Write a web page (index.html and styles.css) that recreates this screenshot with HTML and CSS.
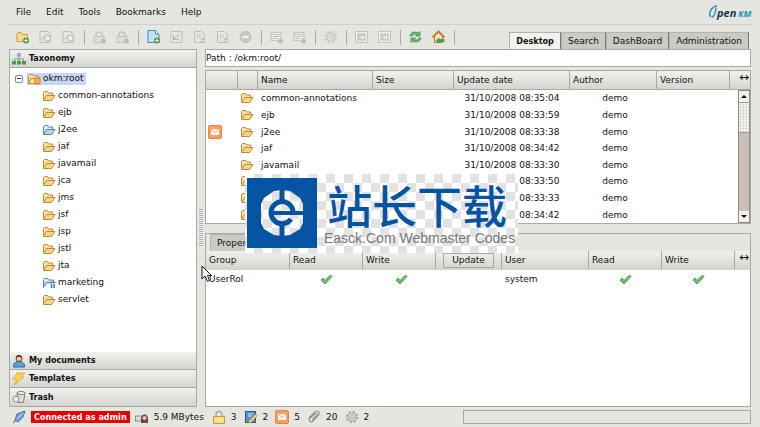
FILE: index.html
```html
<!DOCTYPE html>
<html lang="en">
<head>
    <meta charset="UTF-8">
    <meta name="viewport" content="width=device-width, initial-scale=1.0">
    <title>OpenKM</title>
    <link rel="stylesheet" href="styles.css">
</head>
<body>
    <!-- Shared icons -->
    <svg class="sprite" aria-hidden="true">
        <symbol id="folder" viewBox="0 0 14 12">
            <path d="M1.5 9.5V2.5L2.5 1.5H5.5L6.5 3H10.5V5" fill="#fbe3a4" stroke="#b98a3c"/>
            <path d="M1.5 10.5L4.5 5.5H13L9.5 10.5Z" fill="#fbd67c" stroke="#b98a3c" stroke-linejoin="round"/>
        </symbol>
        <symbol id="folder-blue" viewBox="0 0 14 12">
            <path d="M1.5 9.5V2.5L2.5 1.5H5.5L6.5 3H10.5V5" fill="#d8ebf6" stroke="#5582a0"/>
            <path d="M1.5 10.5L4.5 5.5H13L9.5 10.5Z" fill="#b4d7ec" stroke="#5582a0" stroke-linejoin="round"/>
        </symbol>
        <symbol id="folder-shared" viewBox="0 0 14 12">
            <path d="M1.5 10.5V2.5L2.5 1.5H5.5L6.5 3H11.5V5M1.5 10.5L4 5.5H10" fill="#d8ebf6" stroke="#5582a0"/>
            <path d="M8 5.5H13.5M9.5 7V11M12 7V11" stroke="#427ba4" stroke-width="1.5"/>
        </symbol>
        <symbol id="folder-root" viewBox="0 0 14 12">
            <path d="M1.5 10.5V2.5L2.5 1.5H5.5L6.5 3H11.5V10.5Z" fill="#fbe3a4" stroke="#c98d36"/>
            <path d="M1.5 10.5L4 5.5H9" fill="none" stroke="#c98d36"/>
            <rect x="8" y="5" width="5" height="6" fill="#f6b24d" stroke="#df7932"/>
        </symbol>
        <symbol id="mail" viewBox="0 0 14 14">
            <rect x=".5" y=".5" width="13" height="13" rx="1.5" fill="#f9a05c" stroke="#ee7f45"/>
            <rect x="3" y="4" width="8" height="6" fill="#fff"/>
            <path d="M3 4L7 7.5L11 4" fill="none" stroke="#f5a468"/>
        </symbol>
        <symbol id="check" viewBox="0 0 13 11">
            <path d="M1 6L3 4L5 6.5L10.5 1L12 2.5L5 10Z" fill="#6cc46a" stroke="#3b8a43" stroke-width=".8"/>
        </symbol>
        <symbol id="plus" viewBox="0 0 14 14">
            <circle cx="10.5" cy="10.5" r="3" fill="#4c9d42"/>
            <path d="M8.8 10.5H12.2M10.5 8.8V12.2" stroke="#fff"/>
        </symbol>
        <symbol id="doc" viewBox="0 0 14 14">
            <path d="M2 1.5H9L12 4.5V12.5H2Z" fill="#e6e6e3" stroke="#bdbdba"/>
            <path d="M4 5.5H9M4 7.5H8" stroke="#c6c6c3"/>
            <circle cx="10.5" cy="10.5" r="2.5" fill="#c2c2bf"/>
            <path d="M9 10.5H12" stroke="#eee"/>
        </symbol>
        <symbol id="doc-find" viewBox="0 0 14 14">
            <path d="M1.5 1.5H9L12 4.5V12.5H1.5Z" fill="#e6e6e3" stroke="#bdbdba"/>
            <path d="M3 10L7 5V10" fill="none" stroke="#c0c0bd"/>
            <circle cx="9" cy="8" r="3" fill="#efefec" stroke="#b4b4b1"/>
        </symbol>
        <symbol id="edit" viewBox="0 0 14 14">
            <rect x="1.5" y="1.5" width="11" height="11" fill="#e6e6e3" stroke="#bdbdba"/>
            <path d="M4 9.5L10 4M4 5V9.5H9" fill="none" stroke="#b0b0ad"/>
        </symbol>
        <symbol id="lock" viewBox="0 0 14 14">
            <path d="M3.5 7V5A3 3 0 0 1 9.5 5V7" fill="none" stroke="#c2c2bf" stroke-width="1.5"/>
            <rect x="1.5" y="6.5" width="10" height="6" fill="#dededb" stroke="#c2c2bf"/>
            <circle cx="11" cy="11" r="2.5" fill="#bdbdba"/>
        </symbol>
        <symbol id="list" viewBox="0 0 14 14">
            <rect x="1.5" y="2.5" width="10" height="8" fill="#eeeeeb" stroke="#c2c2bf"/>
            <path d="M1.5 4.5H11.5M3 6.5H10M3 8.5H8" stroke="#c2c2bf"/>
            <circle cx="11" cy="11" r="2.5" fill="#bdbdba"/>
        </symbol>
        <symbol id="gear" viewBox="0 0 14 14">
            <circle cx="7" cy="7" r="5.3" fill="none" stroke="#a9a9a6" stroke-width="2" stroke-dasharray="2.1 2.06"/>
            <circle cx="7" cy="7" r="4" fill="#dededb" stroke="#a4a4a1"/>
            <circle cx="7" cy="7" r="1.5" fill="#f5f5f3" stroke="#a4a4a1"/>
        </symbol>
        <symbol id="image" viewBox="0 0 14 14">
            <rect x="1" y="1.5" width="12" height="11" fill="#ededea" stroke="#c2c2bf"/>
            <rect x="3.5" y="4" width="7" height="6" fill="#d2d2cf" stroke="#bdbdba"/>
            <path d="M6 7L8 9L10 6" fill="none" stroke="#fff"/>
        </symbol>
    </svg>

    <header class="top">
        <nav class="menu">
            <a href="#">File</a>
            <a href="#">Edit</a>
            <a href="#">Tools</a>
            <a href="#">Bookmarks</a>
            <a href="#">Help</a>
        </nav>
        <svg class="logo" viewBox="0 0 44 16" role="img" aria-label="OpenKM">
            <path d="M3 13C0 11 3 4 6 3M4 13.5C7 12 8 6 8 3.5M6 2.5L9 2" fill="none" stroke="#2b8fc4" stroke-width="1.4"/>
            <text x="9" y="13" class="logo-open">pen</text>
            <text x="30" y="13" class="logo-km">KM</text>
        </svg>
    </header>

    <div class="bar">
        <div class="toolbar">
            <button aria-label="New folder"><svg viewBox="0 0 14 14"><path d="M1.5 11.5V3.5L2.5 2.5H5.5L7 4.5H12V11.5Z" fill="#fbdc8a" stroke="#c89b45"/><use href="#plus"/></svg></button>
            <button aria-label="Find document" disabled><svg><use href="#doc-find"/></svg></button>
            <button aria-label="Find folder" disabled><svg><use href="#doc-find"/></svg></button>
            <i class="sep"></i>
            <button aria-label="Lock" disabled><svg><use href="#lock"/></svg></button>
            <button aria-label="Unlock" disabled><svg><use href="#lock"/></svg></button>
            <i class="sep"></i>
            <button aria-label="Add document"><svg viewBox="0 0 14 14"><path d="M1.5 .5H9L12.5 4V12.5H1.5Z" fill="#c5e0f5" stroke="#4488b8"/><path d="M9 .5V4H12.5" fill="#fff" stroke="#4488b8"/><use href="#plus"/></svg></button>
            <button aria-label="Edit" disabled><svg><use href="#edit"/></svg></button>
            <button aria-label="Check in" disabled><svg><use href="#doc"/></svg></button>
            <button aria-label="Cancel check out" disabled><svg><use href="#doc"/></svg></button>
            <button aria-label="Delete" disabled><svg viewBox="0 0 14 14"><circle cx="7" cy="7" r="5.5" fill="#c9c9c6" stroke="#bdbdba"/><path d="M4 7H10" stroke="#f2f2f0" stroke-width="2"/></svg></button>
            <i class="sep"></i>
            <button aria-label="Add property group" disabled><svg><use href="#list"/></svg></button>
            <button aria-label="Remove property group" disabled><svg><use href="#list"/></svg></button>
            <i class="sep"></i>
            <button aria-label="Workflow" disabled><svg class="faded"><use href="#gear"/></svg></button>
            <i class="sep"></i>
            <button aria-label="Scanner" disabled><svg><use href="#image"/></svg></button>
            <button aria-label="Uploader" disabled><svg><use href="#image"/></svg></button>
            <i class="sep"></i>
            <button aria-label="Refresh"><svg viewBox="0 0 14 14"><path d="M1.5 6C2 2 7 1 10 3L11.5 1.5V6H7L8.5 4.5C6.5 3.5 4 4 3.5 6Z" fill="#67b866" stroke="#3b8747" stroke-width=".7"/><path d="M12.5 8C12 12 7 13 4 11L2.5 12.5V8H7L5.5 9.5C7.5 10.5 10 10 10.5 8Z" fill="#67b866" stroke="#3b8747" stroke-width=".7"/></svg></button>
            <button aria-label="Home"><svg viewBox="0 0 14 14"><path d="M3 6.5V12.5H11V6.5" fill="#f8e4ba" stroke="#b07a3e"/><path d="M1 7.5L7 1.5L13 7.5" fill="none" stroke="#cf7a30" stroke-width="2"/><path d="M4 10.5L8 7.5V9H13V12H8V13.5Z" fill="#4fa04a"/></svg></button>
            <i class="sep"></i>
        </div>
        <div class="tabs">
            <button class="tab active">Desktop</button>
            <button class="tab">Search</button>
            <button class="tab">DashBoard</button>
            <button class="tab">Administration</button>
        </div>
    </div>

    <main class="main">
        <aside class="stack">
            <button class="stack-head">
                <svg viewBox="0 0 14 14"><path d="M7 4V7M2.5 9V7H11.5V9M7 7V9" fill="none" stroke="#8a9a8a"/><rect x="5" y="1" width="4" height="3.5" fill="#8fb0d6"/><rect x="0" y="9" width="4" height="3.5" fill="#4a9a4a"/><rect x="5" y="9" width="4" height="3.5" fill="#4a9a4a"/><rect x="10" y="9" width="4" height="3.5" fill="#4a9a4a"/></svg>
                Taxonomy
            </button>
            <div class="tree">
                <div class="root">
                    <button class="toggle" aria-label="Collapse"></button>
                    <a href="#" class="selected"><svg><use href="#folder-root"/></svg>okm:root</a>
                </div>
                <ul>
                    <li><a href="#"><svg><use href="#folder"/></svg>common-annotations</a></li>
                    <li><a href="#"><svg><use href="#folder"/></svg>ejb</a></li>
                    <li><a href="#"><svg><use href="#folder-blue"/></svg>j2ee</a></li>
                    <li><a href="#"><svg><use href="#folder"/></svg>jaf</a></li>
                    <li><a href="#"><svg><use href="#folder"/></svg>javamail</a></li>
                    <li><a href="#"><svg><use href="#folder"/></svg>jca</a></li>
                    <li><a href="#"><svg><use href="#folder"/></svg>jms</a></li>
                    <li><a href="#"><svg><use href="#folder"/></svg>jsf</a></li>
                    <li><a href="#"><svg><use href="#folder"/></svg>jsp</a></li>
                    <li><a href="#"><svg><use href="#folder"/></svg>jstl</a></li>
                    <li><a href="#"><svg><use href="#folder"/></svg>jta</a></li>
                    <li><a href="#"><svg><use href="#folder-shared"/></svg>marketing</a></li>
                    <li><a href="#"><svg><use href="#folder"/></svg>servlet</a></li>
                </ul>
            </div>
            <button class="stack-head">
                <svg viewBox="0 0 14 14"><path d="M1.5 13C1 9 4 7.5 7 7.5S13 9 12.5 13Z" fill="#5b9be0" stroke="#31659f"/><circle cx="7" cy="4.5" r="3" fill="#f0c49b" stroke="#6b3b1d"/><path d="M4 4C4 0 10 0 10 4L7 2.5Z" fill="#5c2d14"/></svg>
                My documents
            </button>
            <button class="stack-head">
                <svg viewBox="0 0 14 14"><path d="M5 1H13L9 5H12L2 13L5 7.5H1Z" fill="#fbd34a" stroke="#dba83a" stroke-width=".8"/></svg>
                Templates
            </button>
            <button class="stack-head">
                <svg viewBox="0 0 14 14"><path d="M5 3L6 12.5H11.5L13 3Z" fill="#dcdcda" stroke="#80807e"/><ellipse cx="9" cy="3" rx="4" ry="1.5" fill="#f6f6f4" stroke="#80807e"/><circle cx="4" cy="9" r="3" fill="#eee" stroke="#8b8b89"/></svg>
                Trash
            </button>
        </aside>

        <div class="splitter"><i></i></div>

        <section class="content">
            <div class="path">Path : /okm:root/</div>

            <div class="files">
                <table>
                    <colgroup>
                        <col class="c-mark"><col class="c-icon"><col class="c-name"><col class="c-size"><col class="c-date"><col class="c-author"><col class="c-version"><col class="c-end">
                    </colgroup>
                    <thead>
                        <tr><th></th><th></th><th>Name</th><th>Size</th><th>Update date</th><th>Author</th><th>Version</th><th class="resize">↔</th></tr>
                    </thead>
                    <tbody>
                        <tr><td></td><td><svg><use href="#folder"/></svg></td><td>common-annotations</td><td></td><td>31/10/2008 08:35:04</td><td>demo</td><td></td><td></td></tr>
                        <tr><td></td><td><svg><use href="#folder"/></svg></td><td>ejb</td><td></td><td>31/10/2008 08:33:59</td><td>demo</td><td></td><td></td></tr>
                        <tr><td><svg class="mark"><use href="#mail"/></svg></td><td><svg><use href="#folder"/></svg></td><td>j2ee</td><td></td><td>31/10/2008 08:33:38</td><td>demo</td><td></td><td></td></tr>
                        <tr><td></td><td><svg><use href="#folder"/></svg></td><td>jaf</td><td></td><td>31/10/2008 08:34:42</td><td>demo</td><td></td><td></td></tr>
                        <tr><td></td><td><svg><use href="#folder"/></svg></td><td>javamail</td><td></td><td>31/10/2008 08:33:30</td><td>demo</td><td></td><td></td></tr>
                        <tr><td></td><td><svg><use href="#folder"/></svg></td><td>jca</td><td></td><td>31/10/2008 08:33:50</td><td>demo</td><td></td><td></td></tr>
                        <tr><td></td><td><svg><use href="#folder"/></svg></td><td>jms</td><td></td><td>31/10/2008 08:33:33</td><td>demo</td><td></td><td></td></tr>
                        <tr><td></td><td><svg><use href="#folder"/></svg></td><td>jsf</td><td></td><td>31/10/2008 08:34:42</td><td>demo</td><td></td><td></td></tr>
                    </tbody>
                </table>
                <div class="scrollbar">
                    <button class="up" aria-label="Scroll up"></button>
                    <div class="thumb"></div>
                    <button class="down" aria-label="Scroll down"></button>
                </div>
            </div>

            <div class="details">
                <div class="detail-tabs"><button class="tab">Properties</button></div>
                <table>
                    <colgroup>
                        <col class="d-group"><col class="d-flag"><col class="d-flag"><col class="d-update"><col class="d-user"><col class="d-flag"><col class="d-flag"><col class="d-end">
                    </colgroup>
                    <thead>
                        <tr><th>Group</th><th>Read</th><th>Write</th><th class="update"><button>Update</button></th><th>User</th><th>Read</th><th>Write</th><th class="resize">↔</th></tr>
                    </thead>
                    <tbody>
                        <tr><td>UserRol</td><td><svg><use href="#check"/></svg></td><td><svg><use href="#check"/></svg></td><td></td><td>system</td><td><svg><use href="#check"/></svg></td><td><svg><use href="#check"/></svg></td><td></td></tr>
                    </tbody>
                </table>
            </div>
        </section>
    </main>

    <footer class="status">
        <svg viewBox="0 0 14 14"><path d="M1 13L4 10" stroke="#7f8a99" stroke-width="1.5"/><path d="M3 10L5 4L13 1L11 7L6 12Z" fill="#6fa3dd" stroke="#4672a8"/><path d="M5 9L11 3" stroke="#cfe2f5"/></svg>
        <span class="connected">Connected as admin</span>
        <svg viewBox="0 0 14 14"><rect x=".5" y="6" width="8" height="5" fill="#ddd" stroke="#8a8a88"/><path d="M6 13V9C6 3 13 3 13 9V13Z" fill="#5c4a46"/><circle cx="9.5" cy="8" r="2" fill="#f0c4a8"/><path d="M8 13L9.5 10.5L11 13Z" fill="#d33"/></svg>
        <span class="size">5.9 MBytes</span>
        <svg viewBox="0 0 14 14"><path d="M4 7V4.5A3 3 0 0 1 10 4.5V7" fill="none" stroke="#a8a8a0" stroke-width="1.5"/><rect x="1.5" y="6.5" width="11" height="7" fill="#f7d778" stroke="#c7a045"/><path d="M3 9H11M3 11H11" stroke="#fdf0bd"/></svg>
        <span class="count">3</span>
        <svg viewBox="0 0 14 14"><rect x="1.5" y="1.5" width="10" height="11" fill="#5b8fd0" stroke="#2e5a92"/><path d="M4 4H9M4 6H8" stroke="#cfe0f4"/><path d="M5 11L12 4L13.5 5.5L7 12.5L4.5 13Z" fill="#f7dc6a" stroke="#a88a35" stroke-width=".7"/></svg>
        <span class="count">2</span>
        <svg><use href="#mail"/></svg>
        <span class="count">5</span>
        <svg viewBox="0 0 14 14"><path d="M2 8L8 2C10.5 0 13.5 3 11.5 5L6 11C4 13 1 11 2.5 8.5L8 4C10 3 10.5 5 9.5 6L5 10" fill="none" stroke="#8f8f8c" stroke-width="1.1"/></svg>
        <span class="count">20</span>
        <svg><use href="#gear"/></svg>
        <span>2</span>
        <output class="message"></output>
    </footer>

    <div class="watermark">
        <svg viewBox="0 0 70 70" aria-hidden="true">
            <path fill="#0554a3" fill-rule="evenodd" d="M0 0H70V70H0ZM14 26L17 20L27 13L35 12L43 13L53 20L56 26V45L53 51L43 57L35 58L27 57L17 51L14 45Z"/>
            <path d="M35 10V24M35 46V60" stroke="#0554a3" stroke-width="5"/>
            <path d="M26 35H58" stroke="#0554a3" stroke-width="4"/>
            <path d="M44 41A11 11 0 1 1 46 34" fill="none" stroke="#0554a3" stroke-width="5"/>
        </svg>
        <div class="watermark-text">
            <strong lang="zh">站长下载</strong>
            <span>Easck.Com Webmaster Codes</span>
        </div>
    </div>

    <svg class="cursor" viewBox="0 0 12 18" aria-hidden="true"><path d="M1 1V14L4 11L6.5 16.5L8.5 15.5L6.5 10.5H10.5Z" fill="#fff" stroke="#111"/></svg>
</body>
</html>
```
FILE: styles.css
```css
:root {
    --bg: #e6e6e1;
    --line: #a9a9a3;
    --tab: #c9cbc5;
    --head: linear-gradient(#f1f1ee, #d5d5d0);
    --bold-font: "DejaVu Sans Condensed", "DejaVu Sans", sans-serif;
}
* {
    box-sizing: border-box;
}
body {
    margin: 0;
    height: 100vh;
    display: flex;
    flex-direction: column;
    overflow: hidden;
    background: var(--bg);
    color: #111;
    font: 9px/17px "DejaVu Sans", sans-serif;
}
button {
    margin: 0;
    padding: 0;
    border: 0;
    background: none;
    color: inherit;
    font: inherit;
}
a {
    color: inherit;
    text-decoration: none;
}
svg {
    width: 14px;
    height: 14px;
    flex: none;
}
.sprite {
    position: absolute;
    width: 0;
    height: 0;
}

/* Menu and toolbar */
.top {
    display: flex;
    justify-content: space-between;
    align-items: center;
    height: 25px;
    flex: none;
    margin: 0 8px;
    border-bottom: 1px solid #d0d0cb;
}
.menu {
    display: flex;
    gap: 15px;
    padding-left: 8px;
}
.logo {
    width: 44px;
    height: 16px;
    overflow: visible;
}
.logo-open,
.logo-km {
    font: italic bold 11px "Open Sans", sans-serif;
    fill: #17354f;
}
.logo-km {
    font-size: 9px;
    fill: #2b8fc4;
}
.bar {
    display: flex;
    justify-content: space-between;
    height: 24px;
    flex: none;
    padding: 0 11px 0 15px;
}
.toolbar {
    display: flex;
    align-items: center;
    gap: 8px;
}
.toolbar button,
.toolbar svg {
    display: block;
    width: 15px;
    height: 14px;
}
.faded {
    opacity: 0.5;
}
.sep {
    width: 1px;
    height: 15px;
    margin-right: -1px;
    background: var(--line);
}
.tabs {
    display: flex;
    align-self: flex-end;
}
.tab {
    padding: 0 6px;
    border: 1px solid #b4b4ae;
    border-right-color: #777;
    border-bottom: 0;
    background: var(--tab);
    line-height: 16px;
}
.tab.active {
    background: #f1f1ee;
    font-family: var(--bold-font);
    font-weight: bold;
}

/* Left stack */
.main {
    display: flex;
    flex: 1;
    min-height: 0;
    padding: 0 9px;
}
.stack {
    display: flex;
    flex-direction: column;
    width: 188px;
    border: 1px solid var(--line);
    background: #fff;
}
.stack-head {
    display: flex;
    align-items: center;
    gap: 3px;
    height: 18px;
    flex: none;
    padding-left: 2px;
    border-bottom: 1px solid var(--line);
    background: var(--head);
    font-family: var(--bold-font);
    font-weight: bold;
}
.stack-head:last-child {
    border-bottom: 0;
}
.tree {
    flex: 1;
    padding-top: 2px;
    overflow: hidden;
}
.tree a {
    display: inline-flex;
    align-items: center;
    gap: 2px;
}
.tree svg {
    height: 12px;
}
.root {
    display: flex;
    align-items: center;
    gap: 4px;
    height: 17px;
    padding-left: 5px;
}
.root .selected {
    height: 12px;
    padding-right: 2px;
    background: #c6d8f5;
}
.toggle {
    display: grid;
    place-items: center;
    width: 8px;
    height: 8px;
    border: 1px solid #7a8bb5;
    border-radius: 2px;
}
.toggle::before {
    content: "";
    width: 4px;
    height: 1px;
    background: #333;
}
.tree ul {
    margin: 0;
    padding: 0 0 0 32px;
    list-style: none;
}
.tree li {
    display: flex;
}
.splitter {
    display: flex;
    align-items: center;
    justify-content: center;
    width: 8px;
}
.splitter i {
    width: 4px;
    height: 38px;
    background: repeating-linear-gradient(#aaa 0 1px, #f4f4f1 1px 2px);
}

/* Right side */
.content {
    display: flex;
    flex-direction: column;
    flex: 1;
    min-width: 0;
}
.path {
    height: 18px;
    flex: none;
    border: 1px solid var(--line);
    background: #fff;
}
.files,
.details {
    border: 1px solid var(--line);
    background: #fff;
}
.files {
    position: relative;
    margin: 3px 0 9px;
}
table {
    width: 100%;
    border-collapse: separate;
    border-spacing: 0;
    table-layout: fixed;
}
.files table {
    height: 152px;
}
th,
td {
    height: 16px;
    padding: 0;
    line-height: 16px;
    text-align: left;
    font-weight: normal;
    white-space: nowrap;
}
th {
    height: 19px;
    padding-left: 3px;
    border-right: 1px solid var(--line);
    border-bottom: 1px solid var(--line);
    background: var(--head);
}
th:last-child {
    border-right: 0;
}
td svg {
    display: block;
    height: 12px;
    margin-left: 2px;
}
td .mark {
    height: 14px;
}
td:nth-child(3) {
    padding-left: 3px;
}
.files td:nth-child(5),
.files td:nth-child(6) {
    text-align: center;
}
.files td:nth-child(6) {
    padding-left: 3px;
}
.resize {
    padding: 0 1px 0 0;
    font-size: 12px;
    line-height: 12px;
    text-align: right;
    vertical-align: top;
}
.c-mark { width: 32px; }
.c-icon { width: 20px; }
.c-size { width: 81px; }
.c-date { width: 116px; }
.c-author { width: 87px; }
.c-version { width: 73px; }
.c-end { width: 20px; }
.scrollbar {
    position: absolute;
    top: 19px;
    right: 0;
    bottom: 0;
    display: flex;
    flex-direction: column;
    width: 12px;
    border: 1px solid #8f8a84;
    background: #cbbfb4;
}
.scrollbar button {
    display: grid;
    place-items: center;
    height: 11px;
    background: #f1f1ee;
}
.scrollbar button::before {
    content: "";
    border: 3px solid transparent;
    border-top-width: 0;
    border-bottom-color: #111;
}
.scrollbar .down {
    margin-top: auto;
}
.scrollbar .down::before {
    transform: rotate(180deg);
}
.thumb {
    height: 31px;
    border: 1px solid #999;
    border-width: 1px 0;
    background: radial-gradient(#ccc 30%, #f4f4f1 60%) 0 0 / 3px 3px;
}

.details {
    flex: 1;
}
.detail-tabs {
    display: flex;
    padding-left: 4px;
    background: var(--bg);
}
.details th {
    border-bottom-color: #d5d5d0;
}
.details td {
    height: 18px;
}
.details td:first-child,
.details td:nth-child(5) {
    padding-left: 3px;
}
.details td svg {
    width: 13px;
    height: 11px;
    margin: 0 auto;
}
.details .update {
    padding: 0 7px;
}
.update button {
    display: block;
    width: 100%;
    border: 1px solid var(--line);
    line-height: 13px;
}
.d-flag { width: 73px; }
.d-update { width: 66px; }
.d-user { width: 87px; }
.d-end { width: 15px; }

/* Status bar */
.status {
    display: flex;
    align-items: center;
    gap: 5px;
    height: 20px;
    flex: none;
    padding: 0 9px 0 12px;
}
.connected {
    padding: 0 3px;
    background: #e60000;
    color: #fff;
    font-family: var(--bold-font);
    font-weight: bold;
    line-height: 12px;
}
.size {
    margin-right: 3px;
}
.count {
    margin-right: 2px;
}
.message {
    width: 39%;
    height: 14px;
    margin-left: auto;
    border: 1px solid var(--line);
}

/* Overlays */
.watermark {
    position: absolute;
    top: 174px;
    left: 245px;
    display: flex;
    align-items: center;
    gap: 7px;
    padding: 4px 3px 5px 2px;
    background: repeating-conic-gradient(#e2e2e2 0 25%, #fff 0 50%) 0 0 / 18px 18px;
}
.watermark svg {
    width: 70px;
    height: 70px;
}
.watermark-text {
    display: flex;
    flex-direction: column;
    color: #777;
    font: 14px/16px "Liberation Sans", sans-serif;
}
.watermark strong {
    padding-left: 3px;
    color: #0554a3;
    font: 500 45px/50px "Noto Sans CJK SC", sans-serif;
}
.cursor {
    position: absolute;
    top: 265px;
    left: 201px;
    width: 12px;
    height: 18px;
}
```
